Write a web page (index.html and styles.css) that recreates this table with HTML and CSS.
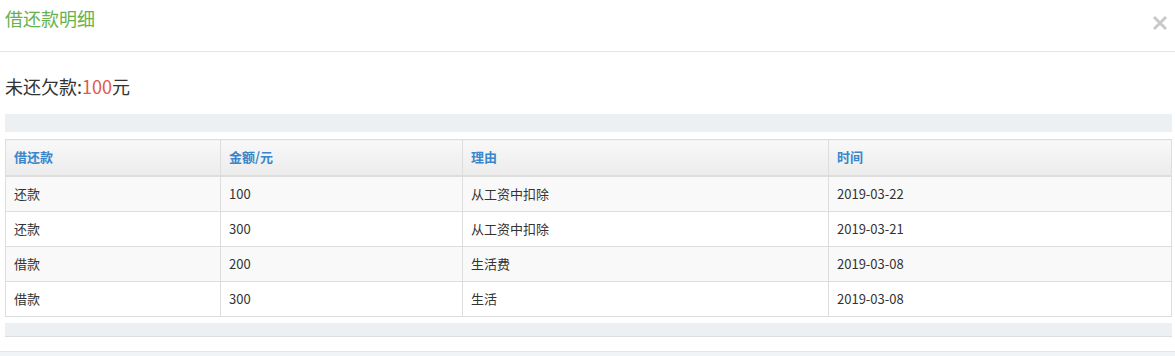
FILE: index.html
```html
<!DOCTYPE html>
<html lang="zh-CN">
<head>
<meta charset="utf-8">
<title>借还款明细</title>
<link rel="stylesheet" href="styles.css">
</head>
<body>
<div class="modal">
  <div class="modal-header">
    <h4 class="modal-title">借还款明细</h4>
    <button class="close" type="button" aria-label="关闭">
      <svg width="16" height="16" viewBox="0 0 16 16"><path d="M2 2 L14 14 M14 2 L2 14" stroke="#c9c9c9" stroke-width="3" stroke-linecap="butt"/></svg>
    </button>
  </div>
  <div class="modal-body">
    <p class="summary">未还欠款:<span class="amount">100</span>元</p>
    <div class="bar"></div>
    <table class="grid">
      <colgroup>
        <col class="c1"><col class="c2"><col class="c3"><col class="c4">
      </colgroup>
      <thead>
        <tr><th>借还款</th><th>金额/元</th><th>理由</th><th>时间</th></tr>
      </thead>
      <tbody>
        <tr><td>还款</td><td>100</td><td>从工资中扣除</td><td>2019-03-22</td></tr>
        <tr><td>还款</td><td>300</td><td>从工资中扣除</td><td>2019-03-21</td></tr>
        <tr><td>借款</td><td>200</td><td>生活费</td><td>2019-03-08</td></tr>
        <tr><td>借款</td><td>300</td><td>生活</td><td>2019-03-08</td></tr>
      </tbody>
    </table>
    <div class="bar bar-bottom"></div>
  </div>
  <div class="modal-footer"></div>
</div>
</body>
</html>
```

FILE: styles.css
```css
* { box-sizing: border-box; }
html, body { margin: 0; padding: 0; background: #fff; }
body {
  font-family: "Noto Sans CJK SC", "Noto Sans", sans-serif;
  color: #333;
  width: 1175px;
  height: 356px;
  overflow: hidden;
}
.modal { display: flex; flex-direction: column; }
.modal-header {
  height: 52px;
  border-bottom: 1px solid #e5e5e5;
  display: flex;
  justify-content: space-between;
  align-items: flex-start;
  padding: 0 7px 0 5px;
}
.modal-title {
  margin: 0;
  font-size: 18px;
  font-weight: normal;
  line-height: 36px;
  color: #68b24c;
}
.close {
  border: 0;
  background: none;
  padding: 0;
  margin-top: 15px;
  width: 16px;
  height: 16px;
  cursor: pointer;
}
.close svg { display: block; }
.modal-body { padding: 22px 3px 0 5px; }
.summary {
  margin: 0;
  font-size: 18px;
  line-height: 24px;
  color: #333;
}
.amount { color: #e5574a; }
.bar {
  height: 18px;
  background: #ecf0f3;
  margin-top: 16px;
}
.grid {
  width: 100%;
  margin-top: 7px;
  border-collapse: collapse;
  border: 1px solid #dddddd;
  font-size: 13px;
  table-layout: fixed;
}
.c1 { width: 215px; }
.c2 { width: 242px; }
.c3 { width: 366px; }
.c4 { width: auto; }
.grid th, .grid td {
  border: 1px solid #dddddd;
  padding: 8px 8px;
  line-height: 18px;
  text-align: left;
  font-weight: normal;
}
.grid th {
  font-weight: bold;
  color: #3a86cb;
  background: linear-gradient(#f8f8f8, #ececec);
  border-bottom: 2px solid #dddddd;
  height: 36px;
}
.grid td { color: #333; height: 35px; }
.grid tbody tr:nth-child(odd) td { background: #f9f9f9; }
.bar-bottom {
  height: 14px;
  margin-top: 6px;
  border-bottom: 1px solid #dddddd;
}
.modal-footer {
  margin-top: 14px;
  height: 10px;
  border-top: 1px solid #e5e5e5;
  background: #f1f4f7;
}
```
